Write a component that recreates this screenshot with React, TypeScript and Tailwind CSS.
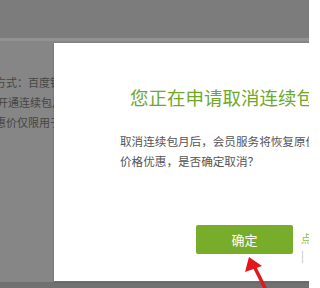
export default function App() {
  const cjk = { fontFamily: '"Microsoft YaHei", "Noto Sans CJK SC", sans-serif' };
  return (
    <div className="relative h-[288px] w-[309px] overflow-hidden bg-[#868686]" style={cjk}>
      <div className="h-[38px] bg-[#7c7c7c]" />
      <div className="h-[3px] bg-[#929292]" />
      <div className="flex flex-col pt-[31px] text-[11px] leading-[20px] text-[#454545] whitespace-nowrap">
        <span className="ml-[-5px]">方式：百度钱包</span>
        <span className="ml-[-3px]">开通连续包月</span>
        <span className="ml-[-5px]">惠价仅限用于</span>
      </div>
      <div className="h-[6px] absolute bottom-0 left-0 w-full bg-[#717171]" />

      {/* dialog */}
      <div className="absolute left-[54px] top-[43px] h-[238px] w-[320px] bg-white shadow-[0_1px_2px_rgba(0,0,0,0.25)]">
        <div className="flex flex-col whitespace-nowrap">
          <h1 className="ml-[76px] mt-[42px] text-[18.5px] leading-[24px] text-[#6fa82b]">
            您正在申请取消连续包月服务
          </h1>
          <div className="ml-[66px] mt-[22px] text-[11.6px] leading-[20px] text-[#555]">
            <p>取消连续包月后，会员服务将恢复原价格</p>
            <p>价格优惠，是否确定取消？</p>
          </div>
          <div className="ml-[142px] mt-[54px] flex items-start gap-[8px]">
            <button className="h-[29px] w-[97px] rounded-[2px] bg-[#78ad2c] text-[13px] text-white">
              确定
            </button>
            <div className="mt-[5px] flex flex-col text-[11px] leading-[17px]">
              <span className="text-[#8bbb55]">点击</span>
              <span className="text-[#bbb]">|</span>
            </div>
          </div>
        </div>
      </div>

      {/* red arrow */}
      <svg className="absolute left-0 top-0" width="309" height="288" viewBox="0 0 309 288">
        <line x1="266" y1="290" x2="252" y2="262" stroke="#e3161b" strokeWidth="3.5" />
        <polygon points="249,257 245,272 262,266" fill="#e3161b" />
      </svg>
    </div>
  );
}
